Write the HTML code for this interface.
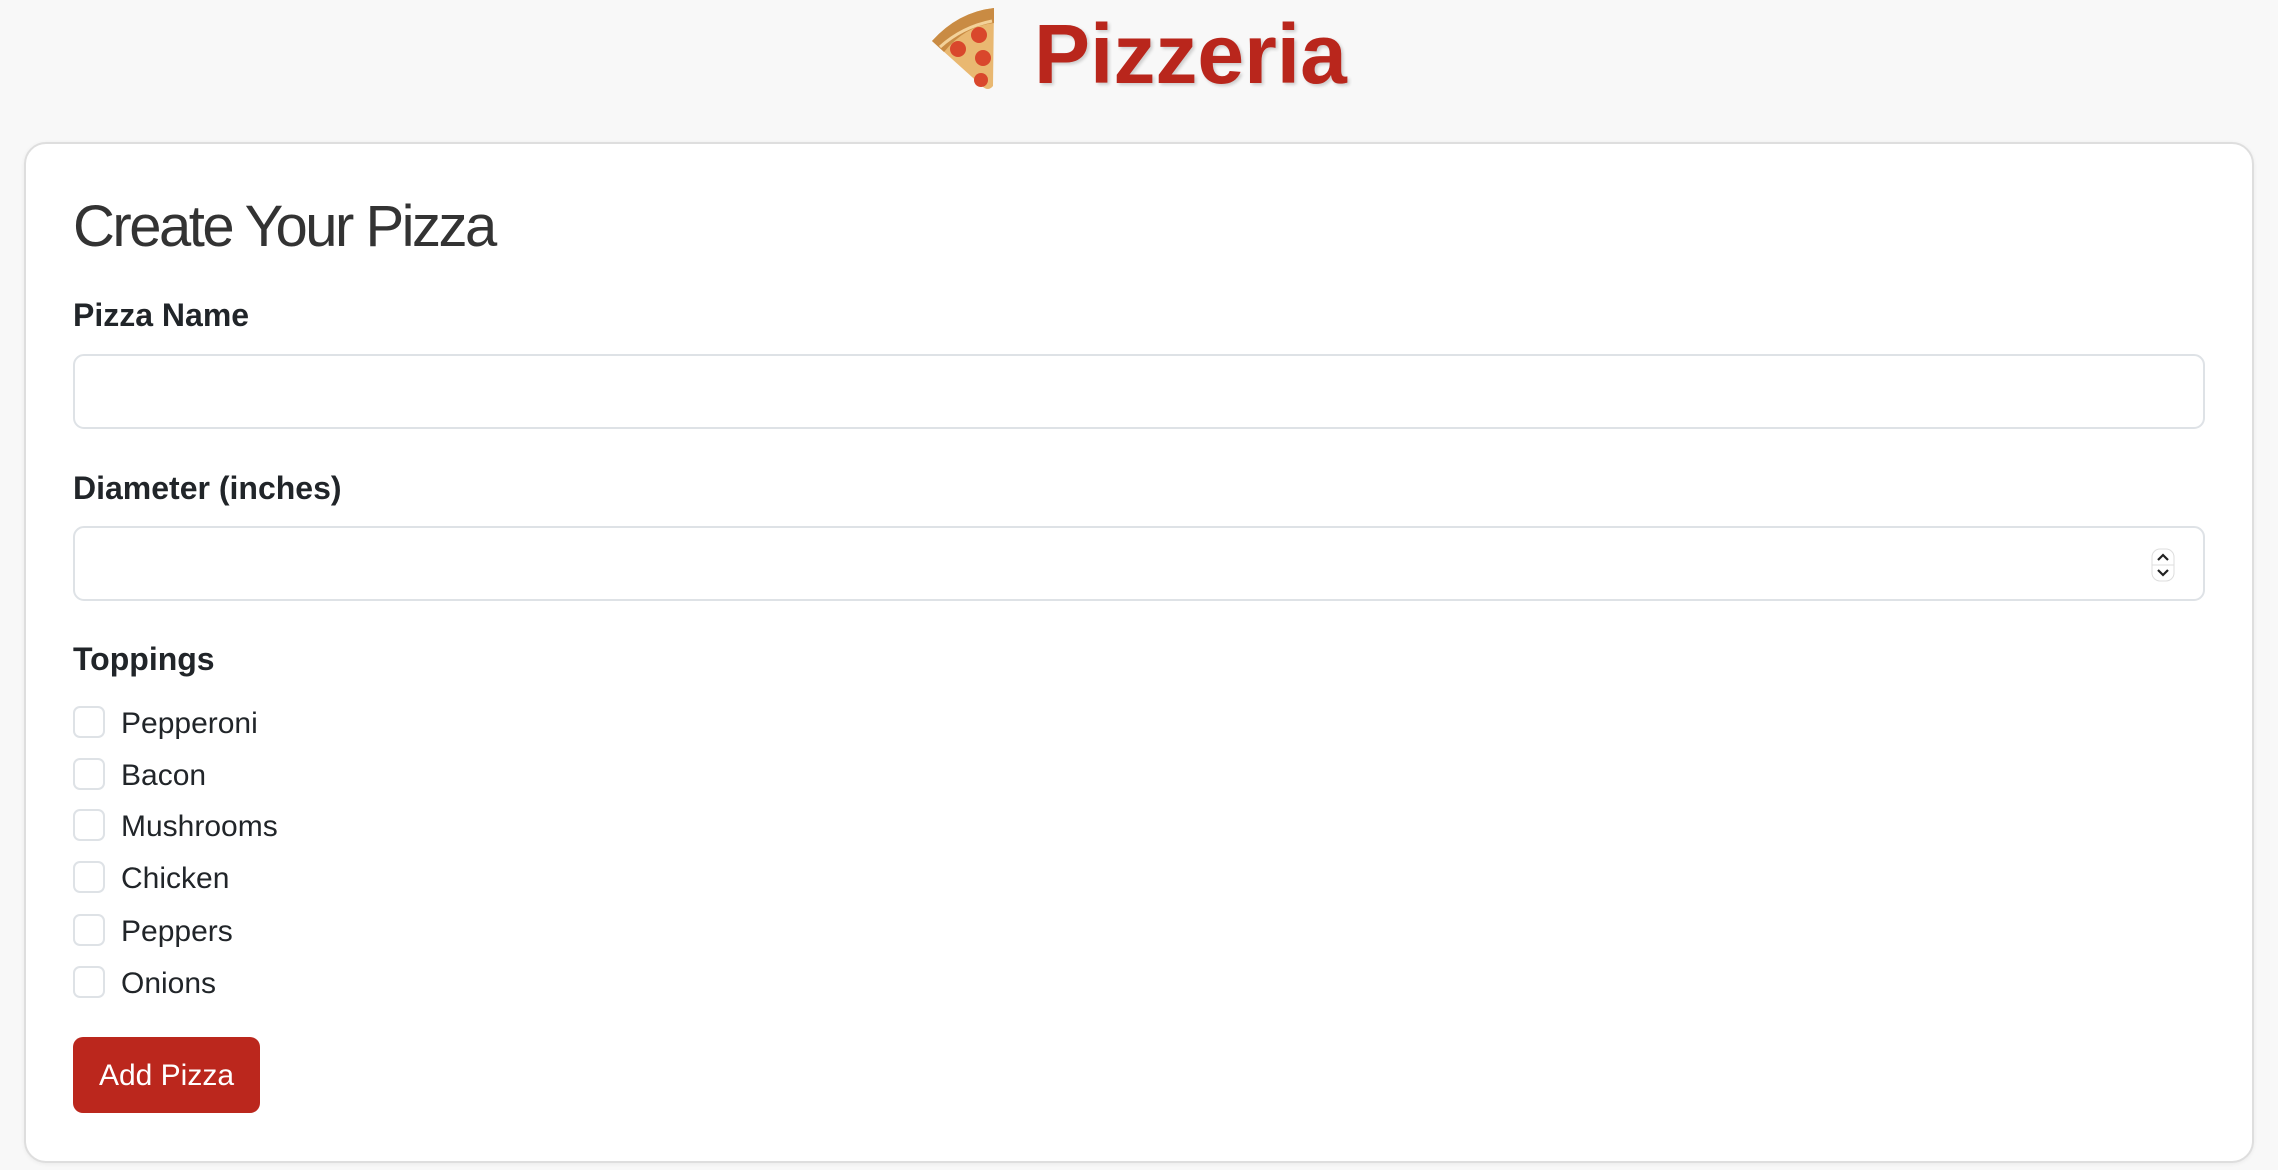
<!DOCTYPE html>
<html><head><meta charset="utf-8"><style>
html,body{margin:0;padding:0;}
body{width:2278px;height:1170px;background:#f8f8f8;position:relative;overflow:hidden;font-family:"Liberation Sans",sans-serif;color:#212529;}
.abs{position:absolute;}
.h1{left:1034px;top:-1px;font-size:84px;font-weight:bold;color:#b9261c;text-shadow:2px 2px 3px rgba(0,0,0,0.18);line-height:110px;}
.card{left:24px;top:142px;width:2226px;height:1017px;background:#fff;border:2px solid #dedede;border-radius:22px;box-shadow:0 1px 4px rgba(0,0,0,0.06);}
.title{left:73px;top:192px;font-size:58px;letter-spacing:-2.5px;color:#333;line-height:70px;}
.lbl{left:73px;font-size:32px;font-weight:bold;line-height:40px;}
.inp{left:73px;width:2128px;height:71px;border:2px solid #dee2e6;border-radius:11px;background:#fff;}
.cb{left:73px;width:28px;height:28px;border:2px solid #dee2e6;border-radius:7px;background:#fff;}
.ct{left:121px;font-size:30px;line-height:40px;}
.btn{left:73px;top:1037px;width:187px;height:76px;background:#bb271d;border-radius:10px;color:#fff;font-size:30px;line-height:78px;text-align:center;}
</style></head><body>
<svg class="abs" style="left:926px;top:4px" width="76" height="90" viewBox="926 4 76 90">
<path d="M932 41 Q958 12 994 8 L993 86 Q988 92 982 86 Z" fill="#e9b871"/>
<path d="M932 41 Q958 12 994 8 L994 23 Q965 26 944 52 Z" fill="#c98b43"/>
<path d="M940 47 Q962 27 992 21" stroke="#f3d29a" stroke-width="3" fill="none"/>
<circle cx="979" cy="35" r="8" fill="#d9472c"/>
<circle cx="958" cy="49" r="8" fill="#d9472c"/>
<circle cx="983" cy="58" r="8" fill="#d9472c"/>
<circle cx="981" cy="80" r="7" fill="#d9472c"/>
</svg>
<div class="abs h1">Pizzeria</div>
<div class="abs card"></div>
<div class="abs title">Create Your Pizza</div>
<div class="abs lbl" style="top:295px">Pizza Name</div>
<div class="abs inp" style="top:354px"></div>
<div class="abs lbl" style="top:468px">Diameter (inches)</div>
<div class="abs inp" style="top:526px"></div>
<svg class="abs" style="left:2151px;top:548px" width="24" height="34" viewBox="0 0 24 34">
<rect x="1" y="1" width="22" height="32" rx="8" fill="#fff" stroke="#ddd"/>
<line x1="1" y1="17" x2="23" y2="17" stroke="#ddd"/>
<path d="M7 12 L12 7 L17 12" stroke="#222" stroke-width="2.2" fill="none"/>
<path d="M7 22 L12 27 L17 22" stroke="#222" stroke-width="2.2" fill="none"/>
</svg>
<div class="abs lbl" style="top:639px">Toppings</div>
<div class="abs cb" style="top:706px"></div><div class="abs ct" style="top:704px">Pepperoni</div>
<div class="abs cb" style="top:758px"></div><div class="abs ct" style="top:756px">Bacon</div>
<div class="abs cb" style="top:809px"></div><div class="abs ct" style="top:807px">Mushrooms</div>
<div class="abs cb" style="top:861px"></div><div class="abs ct" style="top:859px">Chicken</div>
<div class="abs cb" style="top:914px"></div><div class="abs ct" style="top:912px">Peppers</div>
<div class="abs cb" style="top:966px"></div><div class="abs ct" style="top:964px">Onions</div>
<div class="abs btn">Add Pizza</div>
</body></html>
